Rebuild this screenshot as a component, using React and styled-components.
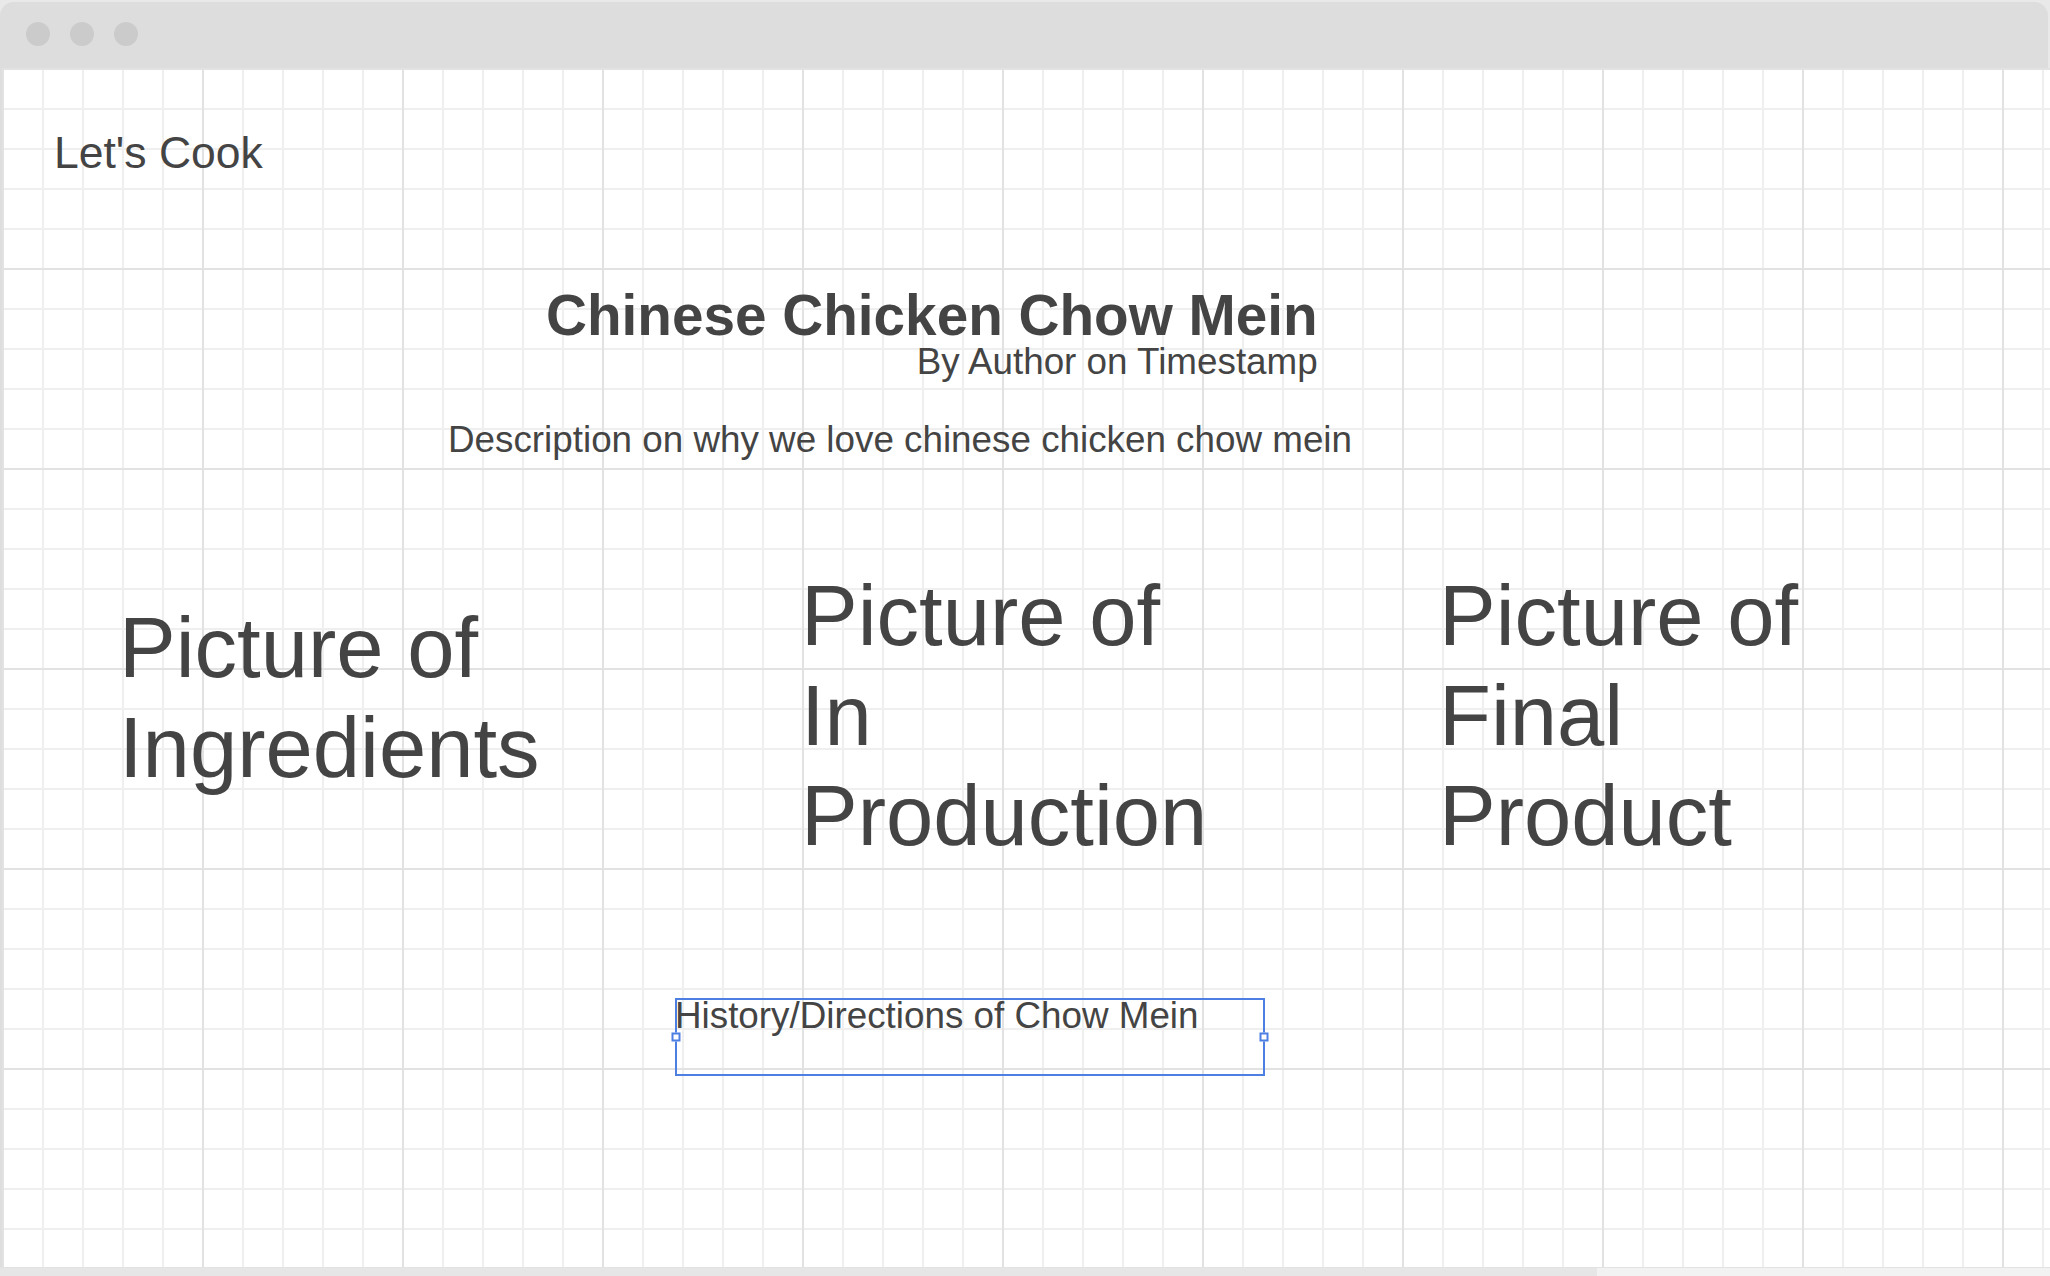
import styled, { createGlobalStyle } from "styled-components";

const GlobalStyle = createGlobalStyle`
    html, body {
        margin: 0;
        padding: 0;
    }

    body {
        background-color: #e9e9e9;
        font-family: "Liberation Sans", Arial, sans-serif;
        color: #444444;
    }
`;

const pictures = [
    { text: "Picture of Ingredients", offset: 32 },
    { text: "Picture of In Production", offset: 0 },
    { text: "Picture of Final Product", offset: 0 },
];

export default function App() {
    return (
        <>
            <GlobalStyle />
            <Window>
                <TitleBar>
                    <Dot />
                    <Dot />
                    <Dot />
                </TitleBar>

                <Canvas>
                    <Brand>Let's Cook</Brand>

                    <TitleBlock>
                        <Title>Chinese Chicken Chow Mein</Title>
                        <Byline>By Author on Timestamp</Byline>
                    </TitleBlock>

                    <Description>Description on why we love chinese chicken chow mein</Description>

                    <PictureRow>
                        {pictures.map(picture => (
                            <Picture key={picture.text} offset={picture.offset}>
                                {picture.text}
                            </Picture>
                        ))}
                    </PictureRow>

                    <History>
                        History/Directions of Chow Mein
                        <Handle side="left" />
                        <Handle side="right" />
                    </History>
                </Canvas>

                <Scrollbar>
                    <Thumb />
                </Scrollbar>
            </Window>
        </>
    );
}

const Window = styled.div`
    width: 2050px;
    height: 1276px;
    display: flex;
    flex-direction: column;
    overflow: hidden;
`

const TitleBar = styled.div`
    height: 66px;
    margin-top: 2px;
    margin-right: 2px;
    display: flex;
    align-items: center;
    gap: 20px;
    padding-left: 26px;
    padding-bottom: 2px;
    box-sizing: border-box;

    background-color: #dddddd;
    border-radius: 14px 14px 0 0;
`

const Dot = styled.span`
    width: 24px;
    height: 24px;
    border-radius: 50%;
    background-color: #cbcbcb;
`

const Canvas = styled.main`
    flex: 1;
    display: flex;
    flex-direction: column;
    align-items: flex-start;

    border-left: 2px solid #dedede;
    background-color: #ffffff;
    background-image:
        linear-gradient(to right, #e2e2e2 2px, transparent 2px),
        linear-gradient(to bottom, #e2e2e2 2px, transparent 2px),
        linear-gradient(to right, #efefef 2px, transparent 2px),
        linear-gradient(to bottom, #efefef 2px, transparent 2px);
    background-size: 200px 200px, 200px 200px, 40px 40px, 40px 40px;
    background-position: 0 0;
`

const Brand = styled.div`
    margin-top: 63px;
    margin-left: 52px;
    font-size: 44.5px;
    line-height: 1;
`

const TitleBlock = styled.header`
    margin-top: 112px;
    margin-left: 544px;
    display: flex;
    flex-direction: column;
    align-items: flex-end;
`

const Title = styled.h1`
    margin: 0;
    font-size: 56.7px;
    font-weight: 700;
    line-height: 1;
`

const Byline = styled.div`
    font-size: 36.8px;
    line-height: 1;
`

const Description = styled.p`
    margin: 41px 0 0 446px;
    font-size: 36.8px;
    line-height: 1;
`

const PictureRow = styled.section`
    margin-top: 107px;
    padding-left: 117px;
    display: grid;
    grid-template-columns: 682px 638px 430px;
    align-items: start;
`

const Picture = styled.div`
    max-width: 430px;
    margin-top: ${({ offset }) => offset}px;
    font-size: 85px;
    line-height: 100px;
`

const History = styled.div`
    position: relative;
    margin-top: 132px;
    margin-left: 673px;
    width: 590px;
    height: 78px;
    box-sizing: border-box;

    font-size: 36.8px;
    line-height: 1;
    white-space: nowrap;

    outline: 2px solid #4d7fe3;
    outline-offset: -2px;
`

const Handle = styled.span`
    position: absolute;
    top: 50%;
    ${({ side }) => side === "left" ? "left: 1px;" : "right: 1px;"}
    width: 9px;
    height: 9px;
    box-sizing: border-box;
    transform: translate(${({ side }) => side === "left" ? "-50%" : "50%"}, -50%);

    background-color: #ffffff;
    border: 2px solid #4d7fe3;
`

const Scrollbar = styled.div`
    height: 8px;
    flex-shrink: 0;
    background-color: #f2f2f2;
    border-top: 1px solid #e2e2e2;
`

const Thumb = styled.div`
    width: 1597px;
    height: 100%;
    background-color: #e6e6e6;
`
